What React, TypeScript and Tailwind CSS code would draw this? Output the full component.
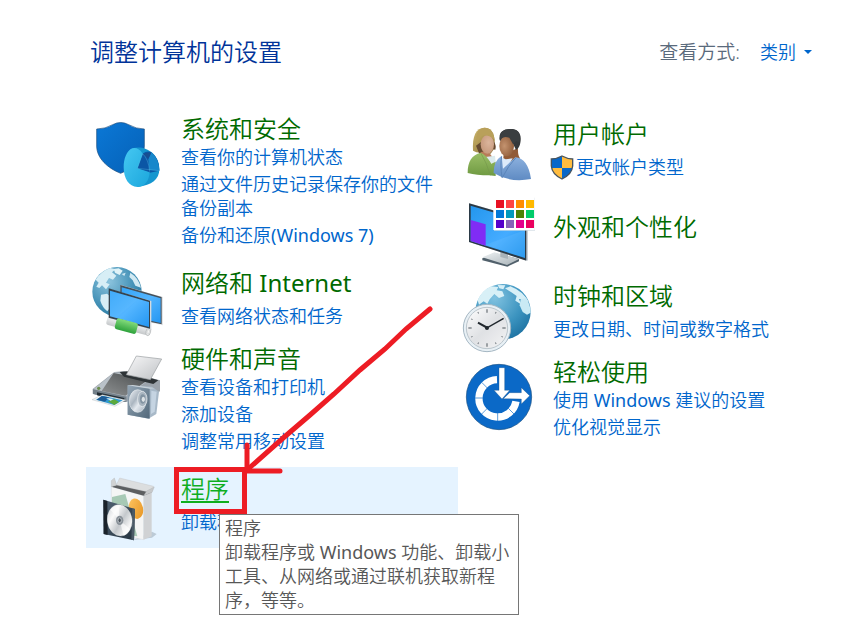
import type { ReactNode } from 'react'
import { clsx } from 'clsx'

type Category = {
  title: string
  icon: ReactNode
  links: string[]
  className?: string
  shield?: boolean
  active?: boolean
}

// Latin words use the regular weight, Chinese text the lighter one
function Mixed({ text }: { text: string }) {
  return text.split(/([A-Za-z(][A-Za-z0-9 ()]*)/).map((part, i) =>
    i % 2 === 1 ? (
      <span key={i} className="font-normal">
        {part}
      </span>
    ) : (
      part
    )
  )
}

function Icon({ viewBox, children }: { viewBox: string; children: ReactNode }) {
  return (
    <svg viewBox={viewBox} className="w-[72px] h-[70px] overflow-visible" aria-hidden="true">
      {children}
    </svg>
  )
}

function SecurityIcon() {
  return (
    <Icon viewBox="30 9 216 210">
      <defs>
        <linearGradient id="sec-shield" x1="0" y1="0" x2="1" y2="1">
          <stop offset="0" stopColor="#0b78d6" />
          <stop offset="1" stopColor="#0560b6" />
        </linearGradient>
        <linearGradient id="sec-pie" x1="0" y1="0" x2="1" y2="1">
          <stop offset="0" stopColor="#45c8f2" />
          <stop offset="1" stopColor="#1ba6dc" />
        </linearGradient>
      </defs>
      <path d="M50 57 Q76 57 98 44 Q122 31 146 44 Q168 57 193 57 V108 C193 145 160 175 122 190 C84 175 50 145 50 108 Z" fill="url(#sec-shield)" stroke="#1b4c7c" strokeWidth="2" />
      <path d="M157 115 C190 104 238 126 238 178 C238 208 215 226 174 231 Z" fill="#1596cf" />
      <path d="M188 131 Q202 120 213 127 Q238 145 238 182 L209 188 L172 176 Z" fill="#0b56a5" />
      <path d="M205 147 L214 127 Q238 148 238 182 L208 180 Z" fill="#1787cb" />
      <path d="M188 131 L214 127 L205 147 Z" fill="#174e91" />
      <path d="M172 175 L188 131 Q175 111 157 115 C140 121 131 147 131 172 C131 205 147 232 174 231 C195 230 207 212 209 187 Z" fill="url(#sec-pie)" />
      <path d="M188 131 L172 175 L237 182 M188 131 Q206 148 209 185" fill="none" stroke="#62c7ec" strokeWidth="1" />
    </Icon>
  )
}

function NetworkIcon() {
  return (
    <Icon viewBox="30 36 216 210">
      <defs>
        <radialGradient id="net-globe" cx="0.35" cy="0.3" r="0.8">
          <stop offset="0" stopColor="#8bc3dd" />
          <stop offset="0.6" stopColor="#4592b7" />
          <stop offset="1" stopColor="#27779f" />
        </radialGradient>
        <linearGradient id="net-screen" x1="0" y1="0" x2="1" y2="1">
          <stop offset="0" stopColor="#35a5f8" />
          <stop offset="0.5" stopColor="#53b5ff" />
          <stop offset="1" stopColor="#2496f2" />
        </linearGradient>
        <linearGradient id="net-tube" x1="0" y1="0" x2="0" y2="1">
          <stop offset="0" stopColor="#f1f3f4" />
          <stop offset="1" stopColor="#c4c7c9" />
        </linearGradient>
        <linearGradient id="net-green" x1="0" y1="0" x2="0" y2="1">
          <stop offset="0" stopColor="#84dc7c" />
          <stop offset="1" stopColor="#2da13b" />
        </linearGradient>
      </defs>
      <circle cx="111" cy="110" r="74" fill="url(#net-globe)" />
      <path d="M47 74 Q64 48 91 39 L107 43 L96 52 L109 62 L99 74 L87 69 L78 83 L89 88 L78 103 L66 91 L58 99 L49 95 L56 83 Z" fill="#d7eef6" />
      <path d="M101 42 L116 40 L128 47 L119 60 L105 53 Z" fill="#e0f3f8" />
      <path d="M125 57 L137 53 L133 63 Z M151 53 Q176 69 183 98 L166 92 L158 76 L148 66 Z" fill="#d1e9f2" />
      <path d="M63 119 L81 116 L100 131 L94 153 L82 169 Q67 157 61 137 Z" fill="#d7edf5" />
      <path d="M122 90 L249 126 V211 L122 184 Z" fill="#e2e5e8" />
      <path d="M121 90 L245 126 V208 L121 182 Z" fill="#46515a" />
      <path d="M125 97 L242 130 V204 L125 178 Z" fill="url(#net-screen)" />
      <g transform="rotate(15 145 214)">
        <rect x="78" y="201" width="134" height="25" rx="7" fill="url(#net-tube)" />
        <ellipse cx="207" cy="214" rx="7" ry="12" fill="#e7e9ea" stroke="#b0b3b5" strokeWidth="2" />
        <ellipse cx="207" cy="214" rx="3" ry="6" fill="#fafafa" stroke="#b0b3b5" />
      </g>
      <path d="M87 101 L214 138 V224 L87 190 Z" fill="#d5dade" />
      <path d="M86 100 L210 137 V221 L86 188 Z" fill="#35434e" />
      <path d="M90 107 L207 141 V216 L90 184 Z" fill="url(#net-screen)" />
      <path d="M90 107 L176 132 L109 189 L90 184 Z" fill="#69beff" opacity="0.25" />
      <g transform="rotate(15 145 214)">
        <rect x="106" y="198" width="66" height="34" rx="7" fill="url(#net-green)" />
      </g>
    </Icon>
  )
}

function HardwareIcon() {
  return (
    <Icon viewBox="30 -6 216 210">
      <defs>
        <linearGradient id="hw-top" x1="0" y1="1" x2="1" y2="0">
          <stop offset="0" stopColor="#8f9293" />
          <stop offset="0.5" stopColor="#6c6f70" />
          <stop offset="1" stopColor="#44494b" />
        </linearGradient>
        <linearGradient id="hw-paper" x1="0" y1="0" x2="1" y2="1">
          <stop offset="0" stopColor="#f8f8f9" />
          <stop offset="1" stopColor="#bec1c4" />
        </linearGradient>
        <linearGradient id="hw-box" x1="0" y1="0" x2="1" y2="1">
          <stop offset="0" stopColor="#93a5b4" />
          <stop offset="1" stopColor="#53697b" />
        </linearGradient>
        <linearGradient id="hw-cone" x1="0" y1="0" x2="1" y2="1">
          <stop offset="0" stopColor="#f0f3f7" />
          <stop offset="0.4" stopColor="#aab5c0" />
          <stop offset="0.6" stopColor="#e4e9ef" />
          <stop offset="1" stopColor="#9caab7" />
        </linearGradient>
      </defs>
      <path d="M103 81 L132 79 L240 106 V139 L210 154 L137 171 L38 146 V132 Z" fill="#9ba3ab" />
      <path d="M104 82 L211 102 L139 154 L40 133 Z" fill="#b9c1c8" />
      <path d="M101 84 L205 104 L136 152 L65 138 Z" fill="url(#hw-top)" />
      <path d="M119 81 L141 79 L235 106 L220 117 L132 95 Z" fill="#2e3437" />
      <path d="M169 33 L245 42 L211 104 L139 89 Z" fill="url(#hw-paper)" stroke="#999da0" strokeWidth="2" />
      <path d="M39 133 L139 155 V171 L39 147 Z" fill="#73808a" />
      <path d="M51 142 L133 159 V170 L51 151 Z" fill="#202a31" />
      <circle cx="56" cy="130" r="5" fill="#6b8c4d" />
      <path d="M67 149 L138 165 L105 184 L36 164 Z" fill="#edf1f3" stroke="#a5adb2" strokeWidth="1" />
      <path d="M68 152 L128 166 L103 180 L48 164 Z" fill="#3299d2" />
      <path d="M65 153 L87 157 L75 170 L50 164 Z" fill="#1d5c96" />
      <path d="M84 169 L104 163 L117 171 L103 180 Z" fill="#5ca93c" />
      <path d="M78 159 L101 162 L92 167 Z" fill="#e1f1f6" />
      <path d="M143 121 L216 125 L237 140 L229 207 L205 221 L143 209 Z" fill="#a8b9c8" />
      <path d="M143 121 L209 130 V221 L143 209 Z" fill="url(#hw-box)" />
      <path d="M143 121 L158 120 L225 130 L209 131 Z" fill="#c8d2d9" />
      <ellipse cx="173" cy="168" rx="25" ry="34" fill="url(#hw-cone)" stroke="#e5ebef" strokeWidth="2" />
      <ellipse cx="187" cy="162" rx="14" ry="23" fill="#a9b5c0" stroke="#f1f4f6" strokeWidth="2" />
      <ellipse cx="188" cy="162" rx="8" ry="14" fill="#8394a2" />
      <ellipse cx="190" cy="163" rx="5" ry="8" fill="#dde2e5" />
      <path d="M214 137 L230 140 L224 200 L213 207 Z" fill="#c5d4e2" />
    </Icon>
  )
}

function ProgramsIcon() {
  return (
    <Icon viewBox="30 39 216 210">
      <defs>
        <linearGradient id="pr-case" x1="0" y1="0" x2="1" y2="1">
          <stop offset="0" stopColor="#526475" />
          <stop offset="1" stopColor="#24323e" />
        </linearGradient>
        <linearGradient id="pr-disc" x1="0" y1="0" x2="1" y2="1">
          <stop offset="0" stopColor="#c7cdd2" />
          <stop offset="0.3" stopColor="#fafafa" />
          <stop offset="0.55" stopColor="#c4c8cc" />
          <stop offset="0.8" stopColor="#f7f7f7" />
          <stop offset="1" stopColor="#bfc5ca" />
        </linearGradient>
        <linearGradient id="pr-egg" x1="0" y1="0" x2="1" y2="1">
          <stop offset="0" stopColor="#ffc562" />
          <stop offset="1" stopColor="#e69422" />
        </linearGradient>
      </defs>
      <path d="M160 240 L216 233 L230 222 L216 215 Z" fill="#bccad6" />
      <path d="M94 80 L191 107 V239 L94 220 Z" fill="#f4f5f5" stroke="#c6c9ca" />
      <path d="M191 107 L215 96 V229 L191 239 Z" fill="#d0d2d4" />
      <path d="M94 80 L113 74 L215 97 L191 107 Z" fill="#5c5e60" />
      <path d="M94 80 V62 L103 54 L110 75 Z" fill="#d0d2d3" stroke="#a9acae" />
      <path d="M109 75 L119 54 L221 79 L215 98 Z" fill="#dcdedf" stroke="#bbbdbf" />
      <path d="M191 107 L200 93 L223 81 L216 97 Z" fill="#c7c9cb" stroke="#aaaeb0" />
      <path d="M96 111 L136 102 L172 229 L94 218 Z" fill="#a7c9b5" />
      <ellipse cx="168" cy="146" rx="21" ry="31" transform="rotate(-12 168 146)" fill="url(#pr-egg)" />
      <path d="M70 119 L165 147 L162 241 L71 222 Z" fill="url(#pr-case)" />
      <path d="M70 119 L82 123 L83 225 L71 222 Z" fill="#1a222a" />
      <path d="M157 145 L165 147 L162 241 L154 239 Z" fill="#4b5a67" />
      <ellipse cx="119" cy="181" rx="37" ry="47" transform="rotate(-8 119 181)" fill="url(#pr-disc)" stroke="#ecf0f2" />
      <path d="M119 181 L91 149 Q101 137 116 136 Z M119 181 L150 207 Q143 224 131 227 Z" fill="#fff" opacity="0.65" />
      <ellipse cx="119" cy="181" rx="11" ry="14" fill="#899199" />
      <ellipse cx="119" cy="181" rx="5" ry="7" fill="#4c555d" stroke="#d7dbdf" strokeWidth="2" />
    </Icon>
  )
}

function UsersIcon() {
  return (
    <Icon viewBox="6 9 216 210">
      <defs>
        <linearGradient id="us-green" x1="0" y1="0" x2="0" y2="1">
          <stop offset="0" stopColor="#9bbf67" />
          <stop offset="1" stopColor="#6f9a42" />
        </linearGradient>
        <linearGradient id="us-blue" x1="0" y1="0" x2="0" y2="1">
          <stop offset="0" stopColor="#8eb2df" />
          <stop offset="1" stopColor="#5f8bc3" />
        </linearGradient>
        <radialGradient id="us-face-a" cx="0.6" cy="0.4" r="0.7">
          <stop offset="0" stopColor="#dcb59c" />
          <stop offset="1" stopColor="#c49679" />
        </radialGradient>
        <radialGradient id="us-face-b" cx="0.35" cy="0.5" r="0.7">
          <stop offset="0" stopColor="#c4936f" />
          <stop offset="1" stopColor="#8d5a38" />
        </radialGradient>
        <linearGradient id="us-hair" x1="0" y1="0" x2="1" y2="1">
          <stop offset="0" stopColor="#cdb76c" />
          <stop offset="1" stopColor="#8b7238" />
        </linearGradient>
      </defs>
      <path d="M39 107 C36 63 49 37 74 38 C99 39 106 61 104 99 L92 116 L49 112 Z" fill="url(#us-hair)" />
      <path d="M48 92 L64 80 L76 116 L59 119 Z" fill="#664b31" />
      <path d="M62 111 L84 108 L97 126 L87 152 L65 133 Z" fill="#b77c58" />
      <path d="M76 126 L105 122 L108 151 L92 143 Z" fill="#dcebee" />
      <path d="M23 174 C23 139 36 119 62 113 Q79 120 94 146 L107 140 V183 L87 181 Q50 181 23 174 Z" fill="url(#us-green)" />
      <path d="M63 115 Q80 143 91 181" fill="none" stroke="#75994b" strokeWidth="2" />
      <path d="M98 76 Q111 91 106 104 L96 102 Z" fill="#694b31" />
      <ellipse cx="82" cy="88" rx="20" ry="28" fill="url(#us-face-a)" />
      <path d="M50 90 Q57 61 77 61 Q98 63 104 80 C103 54 94 39 74 38 Q43 41 50 90 Z" fill="#b9a05a" />
      <path d="M131 118 L174 99 Q173 121 180 130 L157 159 L129 142 Z" fill="#925b37" />
      <path d="M124 127 L137 133 L158 130 L129 180 Z" fill="#dceafa" />
      <path d="M101 174 Q100 139 125 122 L129 161 L166 127 Q204 130 213 192 Q149 204 101 174 Z" fill="url(#us-blue)" />
      <path d="M125 124 Q120 147 126 188 M167 129 Q145 151 127 188" fill="none" stroke="#5b85ba" strokeWidth="3" />
      <path d="M120 78 C114 54 127 42 151 42 C176 42 186 58 181 83 Q179 98 168 105 L157 82 L142 69 Z" fill="#35383a" />
      <ellipse cx="140" cy="93" rx="22" ry="31" fill="url(#us-face-b)" />
      <path d="M119 74 Q129 62 148 68 L160 89 L168 78 L178 82 C184 51 172 41 149 42 Q117 43 119 74 Z" fill="#3a3e40" />
    </Icon>
  )
}

const swatches = [
  ['#e81123', '#ff4343', '#ff8c00', '#ffb900'],
  ['#0078d7', '#0099bc', '#498205', '#00cc6a'],
  ['#5600cb', '#8764b8', '#e3008c', '#ea005e'],
]

function AppearanceIcon() {
  return (
    <Icon viewBox="6 6 216 210">
      <defs>
        <linearGradient id="ap-screen" x1="0" y1="0" x2="1" y2="1">
          <stop offset="0" stopColor="#2396ee" />
          <stop offset="0.6" stopColor="#45acff" />
          <stop offset="1" stopColor="#168de9" />
        </linearGradient>
        <linearGradient id="ap-stand" x1="0" y1="0" x2="1" y2="1">
          <stop offset="0" stopColor="#eef2f4" />
          <stop offset="1" stopColor="#a7b1b6" />
        </linearGradient>
      </defs>
      <path d="M67 205 L103 189 L177 207 V214 L142 230 L67 211 Z" fill="#51606b" />
      <path d="M67 202 L103 187 L177 207 L141 225 Z" fill="url(#ap-stand)" />
      <path d="M121 184 L144 190 V207 L121 201 Z" fill="#a9b3b9" />
      <path d="M28 40 L204 91 V212 L28 156 Z" fill="#c9d0d5" />
      <path d="M27 40 L199 90 V212 L27 156 Z" fill="#2b3a46" />
      <path d="M32 47 L195 95 V204 L32 153 Z" fill="url(#ap-screen)" />
      <path d="M32 90 L77 103 V167 L32 153 Z" fill="#802cf5" />
      <path d="M77 164 L195 120 V204 Z" fill="#74c4ff" opacity="0.25" />
      <rect x="102" y="23" width="123" height="99" fill="#d3dde5" />
      <rect x="100" y="20" width="124" height="100" fill="#fff" />
      {swatches.map((row, y) =>
        row.map((color, x) => (
          <rect key={color} x={108 + x * 30} y={30 + y * 30} width="24" height="24" fill={color} />
        ))
      )}
    </Icon>
  )
}

const ticks = [0, 30, 60, 90, 120, 150, 180, 210, 240, 270, 300, 330]

function ClockIcon() {
  return (
    <Icon viewBox="21 15 216 210">
      <defs>
        <radialGradient id="ck-globe" cx="0.35" cy="0.25" r="0.85">
          <stop offset="0" stopColor="#80c2e0" />
          <stop offset="0.6" stopColor="#3b93bf" />
          <stop offset="1" stopColor="#1b6f9f" />
        </radialGradient>
        <linearGradient id="ck-face" x1="0" y1="0" x2="1" y2="1">
          <stop offset="0" stopColor="#ffffff" />
          <stop offset="0.5" stopColor="#dfe1e4" />
          <stop offset="1" stopColor="#f4f4f5" />
        </linearGradient>
      </defs>
      <circle cx="144" cy="110" r="83" fill="url(#ck-globe)" />
      <path d="M68 76 Q80 47 108 34 L130 36 L125 46 L142 49 L148 63 L132 69 L118 57 L104 73 L97 86 L86 79 L72 89 Z" fill="#d8f0f7" />
      <path d="M128 30 L151 31 L145 43 L133 40 Z M150 40 L166 34 Q205 49 222 82 L207 72 L192 72 L198 88 L181 77 L185 63 L169 52 Z" fill="#d6eff7" />
      <path d="M197 72 L214 70 Q227 91 227 113 L216 119 L203 111 L194 91 Z" fill="#c9eaf4" />
      <circle cx="96" cy="159" r="71" fill="#e8f0f5" stroke="#a5b7c3" strokeWidth="3" />
      <circle cx="96" cy="159" r="62" fill="url(#ck-face)" stroke="#bcc6cd" strokeWidth="3" />
      {ticks.map((angle) => (
        <path
          key={angle}
          d={angle % 90 === 0 ? 'M96 103 V113' : 'M96 104 V109'}
          transform={`rotate(${angle} 96 159)`}
          stroke="#747b80"
          strokeWidth={angle % 90 === 0 ? 4 : 3}
        />
      ))}
      <path d="M69 143 L98 159" stroke="#20272d" strokeWidth="6" />
      <path d="M92 161 L146 130" stroke="#20272d" strokeWidth="4" />
      <circle cx="96" cy="159" r="6" fill="#20272d" />
    </Icon>
  )
}

function EaseIcon() {
  return (
    <Icon viewBox="21 3 216 210">
      <circle cx="132" cy="126" r="98" fill="#0b69c7" stroke="#174f82" strokeWidth="2" />
      <path d="M126 74 A56 56 0 1 0 183 139" fill="none" stroke="#fff" strokeWidth="22" />
      <path d="M80 82 L98 100 M60 129 H83 M79 178 L97 160 M128 174 V199 M160 160 L178 178" stroke="#0b69c7" strokeWidth="2" />
      <path d="M132 38 H149 V106 H164 L141 132 L117 106 H132 Z" fill="#fff" stroke="#174f82" strokeWidth="1" />
      <path d="M145 131 L164 113 H199 V98 L224 122 L199 147 V132 Z" fill="#fff" stroke="#174f82" strokeWidth="1" />
    </Icon>
  )
}

function UacShield() {
  const outline = 'M48 30 Q65 39 80 39 V60 Q78 85 48 99 Q18 85 16 60 V39 Q31 39 48 30 Z'
  return (
    <svg viewBox="15 27 72 72" className="w-6 h-6 overflow-visible" aria-hidden="true">
      <clipPath id="uac">
        <path d={outline} />
      </clipPath>
      <g clipPath="url(#uac)">
        <path d="M15 27 H48 V66 H15 Z M48 66 H81 V101 H48 Z" fill="#0867c8" />
        <path d="M48 27 H81 V66 H48 Z M15 66 H48 V101 H15 Z" fill="#ffbc3f" />
      </g>
      <path d={outline} fill="none" stroke="#47535d" strokeWidth="4" />
    </svg>
  )
}

const leftColumn: Category[] = [
  {
    title: '系统和安全',
    icon: <SecurityIcon />,
    links: ['查看你的计算机状态', '通过文件历史记录保存你的文件备份副本', '备份和还原(Windows 7)'],
    className: 'pb-3.5',
  },
  { title: '网络和 Internet', icon: <NetworkIcon />, links: ['查看网络状态和任务'] },
  {
    title: '硬件和声音',
    icon: <HardwareIcon />,
    links: ['查看设备和打印机', '添加设备', '调整常用移动设置'],
    className: 'pb-3.5',
  },
  { title: '程序', icon: <ProgramsIcon />, links: ['卸载程序'], className: 'pb-[5px]', active: true },
]

const rightColumn: Category[] = [
  { title: '用户帐户', icon: <UsersIcon />, links: ['更改帐户类型'], shield: true },
  { title: '外观和个性化', icon: <AppearanceIcon />, links: [], className: 'items-center pb-3' },
  { title: '时钟和区域', icon: <ClockIcon />, links: ['更改日期、时间或数字格式'] },
  { title: '轻松使用', icon: <EaseIcon />, links: ['使用 Windows 建议的设置', '优化视觉显示'] },
]

function Tooltip() {
  return (
    <div
      role="tooltip"
      className="absolute left-[133px] top-[47px] w-[300px] border border-[#767676] bg-white pl-[5px] pt-px pb-0.5 text-[18px] leading-6 text-[#575757]"
    >
      <p>程序</p>
      <p>
        <Mixed text="卸载程序或 Windows 功能、卸载小工具、从网络或通过联机获取新程序，等等。" />
      </p>
    </div>
  )
}

function Marker() {
  return (
    <svg
      viewBox="0 0 360 220"
      className="absolute left-0 bottom-0 w-[360px] h-[220px] overflow-visible pointer-events-none"
      fill="none"
      stroke="#ed1c24"
      strokeWidth="5"
      aria-hidden="true"
    >
      <rect x="90.5" y="141.5" width="68" height="42" />
      <path d="M344 -19 L320 1 L299 21 L274 42 L248 66 L224 87 L196 111 L161 142" strokeLinecap="round" />
      <path d="M161 117 V143 L178 143 L194 143" strokeLinecap="round" />
    </svg>
  )
}

function CategoryItem({ title, icon, links, className, shield, active }: Category) {
  return (
    <section className={clsx('relative flex', links.length > 0 ? 'pt-1.5' : 'pt-1', active && 'bg-[#e5f3ff]', className)}>
      <div className="w-[95px] shrink-0 pl-1">{icon}</div>
      <div className="min-w-0 flex-1 pr-4">
        <h2 className="text-2xl leading-8">
          <a href="#" className={active ? 'text-[#0fae1f] underline decoration-2 underline-offset-3' : 'text-[#006a00]'}>
            <Mixed text={title} />
          </a>
        </h2>
        {links.length > 0 && (
          <ul className={clsx('flex flex-col gap-[3px] text-[18px] leading-6 text-[#0066cc]', links.length === 1 && 'mt-[5px]')}>
            {links.map((link) => (
              <li key={link} className={clsx('flex', shield && '-ml-0.5 gap-px')}>
                {shield && <UacShield />}
                <a href="#">
                  <Mixed text={link} />
                </a>
              </li>
            ))}
          </ul>
        )}
      </div>
      {active && <Tooltip />}
      {active && <Marker />}
    </section>
  )
}

export default function App() {
  return (
    <main className="min-h-screen bg-white pt-[38px] pr-4 pl-[86px] font-[350] font-['Noto_Sans','Noto_Sans_CJK_SC',sans-serif]">
      <header className="flex items-center justify-between pl-1 pr-[18px]">
        <h1 className="text-2xl leading-7 text-[#003399]">调整计算机的设置</h1>
        <div className="flex items-center gap-5">
          <label htmlFor="view" className="text-[19px] leading-7 text-[#5a6a7c]">
            查看方式:
          </label>
          <div className="relative flex items-center">
            <select id="view" className="appearance-none bg-transparent pr-4 text-[18px] leading-7 text-[#0066cc]">
              <option>类别</option>
            </select>
            <svg viewBox="0 0 8 4" className="absolute right-0 w-2 h-1 pointer-events-none" aria-hidden="true">
              <path d="M0 0 H8 L4 4 Z" fill="#0066cc" />
            </svg>
          </div>
        </div>
      </header>

      <div className="mt-[41px] grid grid-cols-2">
        <div className="flex flex-col">
          {leftColumn.map((item) => (
            <CategoryItem key={item.title} {...item} />
          ))}
        </div>
        <div className="flex flex-col pt-[5px]">
          {rightColumn.map((item) => (
            <CategoryItem key={item.title} {...item} />
          ))}
        </div>
      </div>
    </main>
  )
}
